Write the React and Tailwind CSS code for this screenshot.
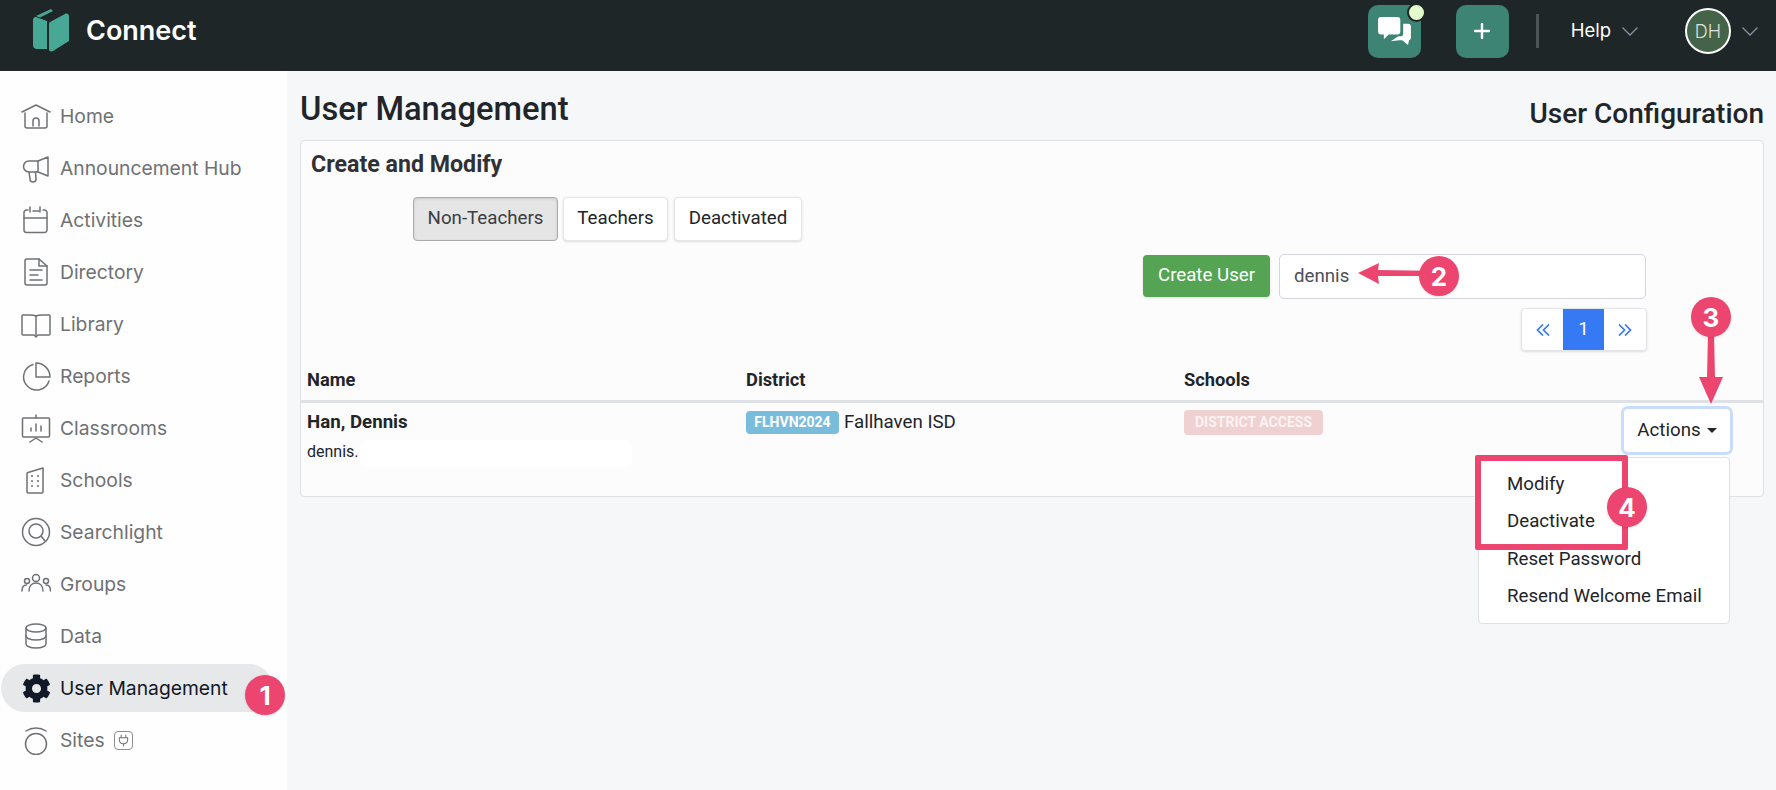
const stroke = {
  fill: "none",
  stroke: "currentColor",
  strokeWidth: 1.5,
  strokeLinecap: "round",
  strokeLinejoin: "round",
};

function Icon({ children }) {
  return (
    <svg viewBox="0 0 30 30" className="w-[30px] h-[30px] shrink-0" {...stroke}>
      {children}
    </svg>
  );
}

const HomeIcon = () => (
  <Icon>
    <path d="M1 11 15 4l14 7" />
    <path d="M4 12v13a2 2 0 0 0 2 2h18a2 2 0 0 0 2-2V12" />
    <path d="M12 25v-5a3 3 0 0 1 6 0v5" />
  </Icon>
);
const HubIcon = () => (
  <Icon>
    <path d="M27 4v19l-10-4H8a5.500 5.500 0 0 1 0-11h9z" />
    <path d="M17 8v11" />
    <path d="M8 19l1 7a3 3 0 0 0 6 0l-.5-7" />
  </Icon>
);
const CalendarIcon = () => (
  <Icon>
    <path d="M7 5H5.500A2.500 2.500 0 0 0 3 7.500V25a2.500 2.500 0 0 0 2.500 2.500h18A2.500 2.500 0 0 0 26 25V7.500A2.500 2.500 0 0 0 23.500 5H22" />
    <path d="M12 6h6" />
    <path d="M3 13h23" />
    <path d="M9 2v5M19 2v5" />
  </Icon>
);
const DirectoryIcon = () => (
  <Icon>
    <path d="M6 2h12l8 7v17a2 2 0 0 1-2 2H6a2 2 0 0 1-2-2V4a2 2 0 0 1 2-2z" />
    <path d="M18 2v7h8" />
    <path d="M9 13h12M9 18h8M9 23h12" />
  </Icon>
);
const LibraryIcon = () => (
  <Icon>
    <path d="M15 7c-2-1-4-1-6-1H2a1 1 0 0 0-1 1v18a1 1 0 0 0 1 1h11l2 2 2-2h11a1 1 0 0 0 1-1V7a1 1 0 0 0-1-1h-7c-2 0-4 0-6 1z" />
    <path d="M15 7v20" />
  </Icon>
);
const ReportsIcon = () => (
  <Icon>
    <path d="M12 3.500A13 13 0 1 0 28 20" />
    <path d="M15 2a14 14 0 0 1 14 14H15z" />
  </Icon>
);
const ClassroomIcon = () => (
  <Icon>
    <path d="M15 2v3" />
    <rect x="1.500" y="5" width="27" height="19" rx="1" />
    <path d="M10 18v-3M15 18v-7M20 18v-5" />
    <path d="M9 29l6-4 6 4" />
  </Icon>
);
const SchoolsIcon = () => (
  <Icon>
    <path d="M7 7.500 22 3v24a1 1 0 0 1-1 1H7a1 1 0 0 1-1-1V8.500a1 1 0 0 1 1-1z" />
    <path d="M11 11h.01M17 11h.01M11 16h.01M17 16h.01M11 21h.01M17 21h.01" strokeWidth="2" />
  </Icon>
);
const SearchIcon = () => (
  <Icon>
    <circle cx="15" cy="15" r="13.500" />
    <circle cx="15" cy="14" r="7" />
    <path d="M20 19l4 5" />
  </Icon>
);
const GroupsIcon = () => (
  <Icon>
    <circle cx="15" cy="9" r="3.500" />
    <path d="M8 22c0-5 3-8 7-8s7 3 7 8" />
    <circle cx="6" cy="12" r="2.500" />
    <path d="M1 22c0-4 2-6 4.500-6" />
    <circle cx="25" cy="12" r="2.500" />
    <path d="M29.500 22c0-4-2-6-4.500-6" />
  </Icon>
);
const DataIcon = () => (
  <Icon>
    <ellipse cx="15" cy="7" rx="10" ry="4" />
    <path d="M5 7v16c0 2 4 4 10 4s10-2 10-4V7" />
    <path d="M5 15c0 2 4 4 10 4s10-2 10-4" />
  </Icon>
);
const SitesIcon = () => (
  <Icon>
    <circle cx="15" cy="19" r="10.500" />
    <path d="M5 6c6-4 14-4 20 0" />
  </Icon>
);

const navItems = [
  { label: "Home", icon: HomeIcon },
  { label: "Announcement Hub", icon: HubIcon },
  { label: "Activities", icon: CalendarIcon },
  { label: "Directory", icon: DirectoryIcon },
  { label: "Library", icon: LibraryIcon },
  { label: "Reports", icon: ReportsIcon },
  { label: "Classrooms", icon: ClassroomIcon },
  { label: "Schools", icon: SchoolsIcon },
  { label: "Searchlight", icon: SearchIcon },
  { label: "Groups", icon: GroupsIcon },
  { label: "Data", icon: DataIcon },
];

function Chevron() {
  return (
    <svg viewBox="0 0 16 9" className="w-[16px] h-[9px]" fill="none" stroke="#8b8fa3" strokeWidth="1.3">
      <path d="M.5.5 8 8l7.500-7.500" />
    </svg>
  );
}

function PageArrows({ flip }) {
  return (
    <svg viewBox="0 0 14 12" className={`w-[14px] h-[12px] ${flip ? "rotate-180" : ""}`} fill="none" stroke="#3679f5" strokeWidth="1.700">
      <path d="M7 .5 1.500 6 7 11.500M13 .5 7.500 6l5.500 5.500" />
    </svg>
  );
}

function Logo() {
  return (
    <svg viewBox="0 0 38 44" className="w-[38px] h-[44px]" fill="#48a896">
      <path d="M1 11c0-2 1.500-3.500 3-3l11 4v28H5c-2.500 0-4-1.500-4-4z" />
      <path d="M4 7 19 0l2 2L8 8.500z" />
      <path d="M18 13 33 5c2-1 4 0 4 2.500V32L21 42c-2 1-4 .500-4-2V16c0-1.500 0-2.500 1-3z" />
    </svg>
  );
}

function Header() {
  return (
    <header className="h-[71px] shrink-0 bg-[#1f2627] flex items-center pb-[9px] pl-[32px] pr-[18px] font-['Inter',sans-serif]">
      <Logo />
      <span className="ml-[16px] text-white text-[27px] font-semibold">Connect</span>
      <div className="ml-auto flex items-center">
        <div className="relative w-[53px] h-[53px] rounded-[10px] bg-[#3d8475] flex items-center justify-center">
          <svg viewBox="0 0 34 30" className="w-[33px] h-[29px]" fill="#fff">
            <path d="M3 0h17a3 3 0 0 1 3 3v12a3 3 0 0 1-3 3H11l-5 5v-5H3a3 3 0 0 1-3-3V3a3 3 0 0 1 3-3z" />
            <path d="M26 7h5a3 3 0 0 1 3 3v12a3 3 0 0 1-2 2l-1 5-6-5h-3l-9 1c4-2 6-4 8-5h2a3 3 0 0 0 3-3z" />
          </svg>
          <span className="absolute -top-[2px] right-[-5px] w-[19px] h-[19px] rounded-full bg-[#e3fccd] border-2 border-[#1f2627]" />
        </div>
        <div className="ml-[35px] w-[53px] h-[53px] rounded-[10px] bg-[#3d8475] flex items-center justify-center">
          <svg viewBox="0 0 16 16" className="w-[16px] h-[16px]" stroke="#fff" strokeWidth="2.400" strokeLinecap="round">
            <path d="M8 1v14M1 8h14" />
          </svg>
        </div>
        <div className="ml-[27px] w-[3px] h-[34px] bg-[#4f5556]" />
        <span className="ml-[32px] text-white text-[18.500px]">Help</span>
        <span className="ml-[11px]"><Chevron /></span>
        <div className="ml-[47px] w-[46px] h-[46px] rounded-full bg-[#456349] border-2 border-white flex items-center justify-center text-[#dce3dd] text-[18px] font-light">
          DH
        </div>
        <span className="ml-[11px]"><Chevron /></span>
      </div>
    </header>
  );
}

function Sidebar() {
  return (
    <aside className="w-[287px] shrink-0 bg-[#fefefe] pt-[19px] font-['Inter',sans-serif] text-[19.300px] text-[#6f7174]">
      {navItems.map(({ label, icon: ItemIcon }) => (
        <div key={label} className="h-[52px] flex items-center gap-[9px] pl-[21px]">
          <ItemIcon />
          <span>{label}</span>
        </div>
      ))}
      <div className="h-[48px] my-[2px] ml-[1px] w-[272px] rounded-full bg-[#e7e8e9] flex items-center gap-[9px] pl-[20px] text-[#111827]">
        <span className="w-[30px] flex justify-center">
          <svg viewBox="0 0 512 512" className="w-[29px] h-[29px]" fill="#111827">
            <path d="M487.400 315.700l-42.600-24.600c4.300-23.200 4.300-47 0-70.200l42.600-24.600c4.900-2.800 7.100-8.600 5.500-14-11.100-35.600-30-67.800-54.700-94.600-3.800-4.100-10-5.100-14.800-2.300L380.800 110c-17.900-15.400-38.500-27.300-60.800-35.100V25.800c0-5.600-3.900-10.500-9.400-11.700-36.700-8.200-74.300-7.800-109.200 0-5.500 1.200-9.400 6.100-9.400 11.700V75c-22.200 7.900-42.800 19.800-60.800 35.100L88.700 85.500c-4.900-2.800-11-1.900-14.800 2.300-24.700 26.700-43.600 58.900-54.700 94.600-1.700 5.400.6 11.200 5.500 14L67.300 221c-4.300 23.200-4.300 47 0 70.200l-42.600 24.600c-4.900 2.800-7.100 8.600-5.500 14 11.100 35.600 30 67.800 54.700 94.600 3.800 4.100 10 5.100 14.800 2.300l42.600-24.600c17.900 15.400 38.500 27.300 60.800 35.100v49.200c0 5.600 3.900 10.500 9.400 11.700 36.700 8.200 74.300 7.800 109.200 0 5.500-1.200 9.400-6.100 9.400-11.700v-49.200c22.200-7.900 42.800-19.800 60.800-35.100l42.600 24.600c4.900 2.800 11 1.900 14.800-2.300 24.700-26.700 43.600-58.900 54.700-94.600 1.500-5.500-.7-11.300-5.600-14.100zM256 336c-44.100 0-80-35.900-80-80s35.900-80 80-80 80 35.900 80 80-35.900 80-80 80z" />
          </svg>
        </span>
        <span>User Management</span>
      </div>
      <div className="h-[52px] flex items-center gap-[9px] pl-[21px]">
        <SitesIcon />
        <span>Sites</span>
        <span className="w-[19px] h-[19px] rounded-[4px] border border-[#8a8c8f] flex items-center justify-center">
          <svg viewBox="0 0 14 14" className="w-[13px] h-[13px]" {...stroke} strokeWidth="1.100">
            <path d="M4.500 1v3M9.500 1v3M2.500 4h9v2.500a4 4 0 0 1-4.500 4 4 4 0 0 1-4.500-4zM7 10.500V13" />
          </svg>
        </span>
      </div>
    </aside>
  );
}

function Card() {
  return (
    <section className="h-[357px] rounded-[4px] border border-[#e0e1e3] bg-[#fcfcfd] text-[18.700px] text-[#212529]">
      <h2 className="pl-[10px] pt-[9px] h-[56px] text-[23.200px] leading-[28px] font-bold text-[#2f3136]">Create and Modify</h2>
      <div className="ml-[112px] flex">
        <button className="h-[44px] w-[145px] pb-[2px] rounded-[4px] border border-[#a9abae] bg-[#e5e5e5] text-[#3a3d42] shadow-[inset_0_1px_3px_rgba(0,0,0,0.12)]">Non-Teachers</button>
        <button className="ml-[5px] h-[44px] w-[105px] pb-[2px] rounded-[4px] border border-[#e4e5e8] bg-white shadow-sm">Teachers</button>
        <button className="ml-[6px] h-[44px] w-[128px] pb-[2px] rounded-[4px] border border-[#e4e5e8] bg-white shadow-sm">Deactivated</button>
      </div>
      <div className="mt-[13px] pr-[117px] flex justify-end gap-[9px]">
        <button className="mt-[1px] h-[42px] w-[127px] pb-[2px] rounded-[4px] bg-[#54a454] text-white shadow-sm">Create User</button>
        <div className="h-[45px] w-[367px] rounded-[5px] border border-[#d3d5de] bg-white pl-[14px] pb-[1px] flex items-center text-[#4b4f57]">dennis</div>
      </div>
      <div className="mt-[9px] pr-[116px] flex justify-end">
        <div className="h-[43px] w-[126px] rounded-[4px] border border-[#e4e5e8] bg-white shadow-sm flex overflow-hidden">
          <span className="w-[41px] flex items-center justify-center"><PageArrows /></span>
          <span className="w-[41px] bg-[#3679f5] text-white flex items-center justify-center">1</span>
          <span className="w-[41px] flex items-center justify-center"><PageArrows flip /></span>
        </div>
      </div>
      <div className="h-[52px] border-b-[3px] border-[#dee2e6] px-[6px] grid grid-cols-[439px_438px_1fr] items-center pt-[8px] font-bold text-[#212529] text-[18.300px]">
        <span>Name</span>
        <span>District</span>
        <span>Schools</span>
      </div>
      <div className="px-[6px] grid grid-cols-[439px_438px_1fr_auto]">
        <div>
          <div className="mt-[7px] leading-[24px] font-bold">Han, Dennis</div>
          <div className="mt-[6px] flex items-start text-[16px] leading-[24px]">
            dennis.
            <span className="ml-[1px] w-[272px] h-[28px] rounded-[8px] bg-white" />
          </div>
        </div>
        <div className="mt-[7px] flex items-center gap-[5px] h-[24px]">
          <span className="h-[23px] w-[93px] rounded-[4px] bg-[#7abcdc] text-white text-[14px] font-bold flex items-center justify-center">FLHVN2024</span>
          <span>Fallhaven ISD</span>
        </div>
        <div className="mt-[7px]">
          <span className="h-[25px] w-[139px] rounded-[4px] bg-[#f0d1d1] text-[#fbf3f3] text-[14px] font-bold flex items-center justify-center">DISTRICT ACCESS</span>
        </div>
        <div className="relative mt-[6px] mr-[27px]">
          <button className="h-[43px] w-[106px] rounded-[4px] bg-white ring-[3px] ring-[#c9dcfb] flex items-center justify-center gap-[6px]">
            Actions
            <span className="w-0 h-0 border-x-[5px] border-x-transparent border-t-[5px] border-t-[#212529]" />
          </button>
          <div className="absolute right-0 top-[48px] w-[252px] rounded-[4px] border border-[#dfe0e3] bg-white pt-[7px] pb-[8px] z-10">
            {["Modify", "Deactivate", "Reset Password", "Resend Welcome Email"].map((item) => (
              <div key={item} className="h-[37.500px] pl-[28px] flex items-center">{item}</div>
            ))}
          </div>
        </div>
      </div>
    </section>
  );
}

function Marker({ n, className }) {
  return (
    <span className={`absolute w-[40px] h-[40px] rounded-full bg-[#ec4670] text-white text-[26px] font-bold font-['Inter',sans-serif] flex items-center justify-center shadow-sm z-30 ${className}`}>
      {n}
    </span>
  );
}

export default function App() {
  return (
    <div className="relative w-[1776px] h-[790px] overflow-hidden flex flex-col bg-[#f6f7f9] font-['Roboto',sans-serif]">
      <Header />
      <div className="flex-1 flex min-h-0">
        <Sidebar />
        <main className="flex-1 pl-[13px] pr-[12px]">
          <div className="h-[69px] flex items-end justify-between pb-[8px]">
            <h1 className="mb-[1px] text-[32.700px] leading-[44px] font-medium text-[#212529]">User Management</h1>
            <span className="mb-[2px] text-[28px] leading-[32px] font-medium text-[#212529]">User Configuration</span>
          </div>
          <Card />
        </main>
      </div>

      {/* annotations */}
      <Marker n="1" className="left-[245px] top-[675px]" />
      <Marker n="2" className="left-[1419px] top-[256px]" />
      <Marker n="3" className="left-[1691px] top-[297px]" />
      <Marker n="4" className="left-[1607px] top-[487px]" />
      <svg viewBox="0 0 90 30" className="absolute left-[1355px] top-[258px] w-[90px] h-[30px] z-20" fill="#ec4670">
        <path d="M3 15 24 5l-1 7 65 1v5l-65 0 1 8z" />
      </svg>
      <svg viewBox="0 0 30 72" className="absolute left-[1696px] top-[333px] w-[30px] h-[72px] z-20" fill="#ec4670">
        <path d="M12 0h6l1 44h8L15 71 3 44h8z" />
      </svg>
      <div className="absolute left-[1475px] top-[455px] w-[153px] h-[95px] rounded-[2px] border-[6px] border-[#ec4670] z-20" />
    </div>
  );
}
